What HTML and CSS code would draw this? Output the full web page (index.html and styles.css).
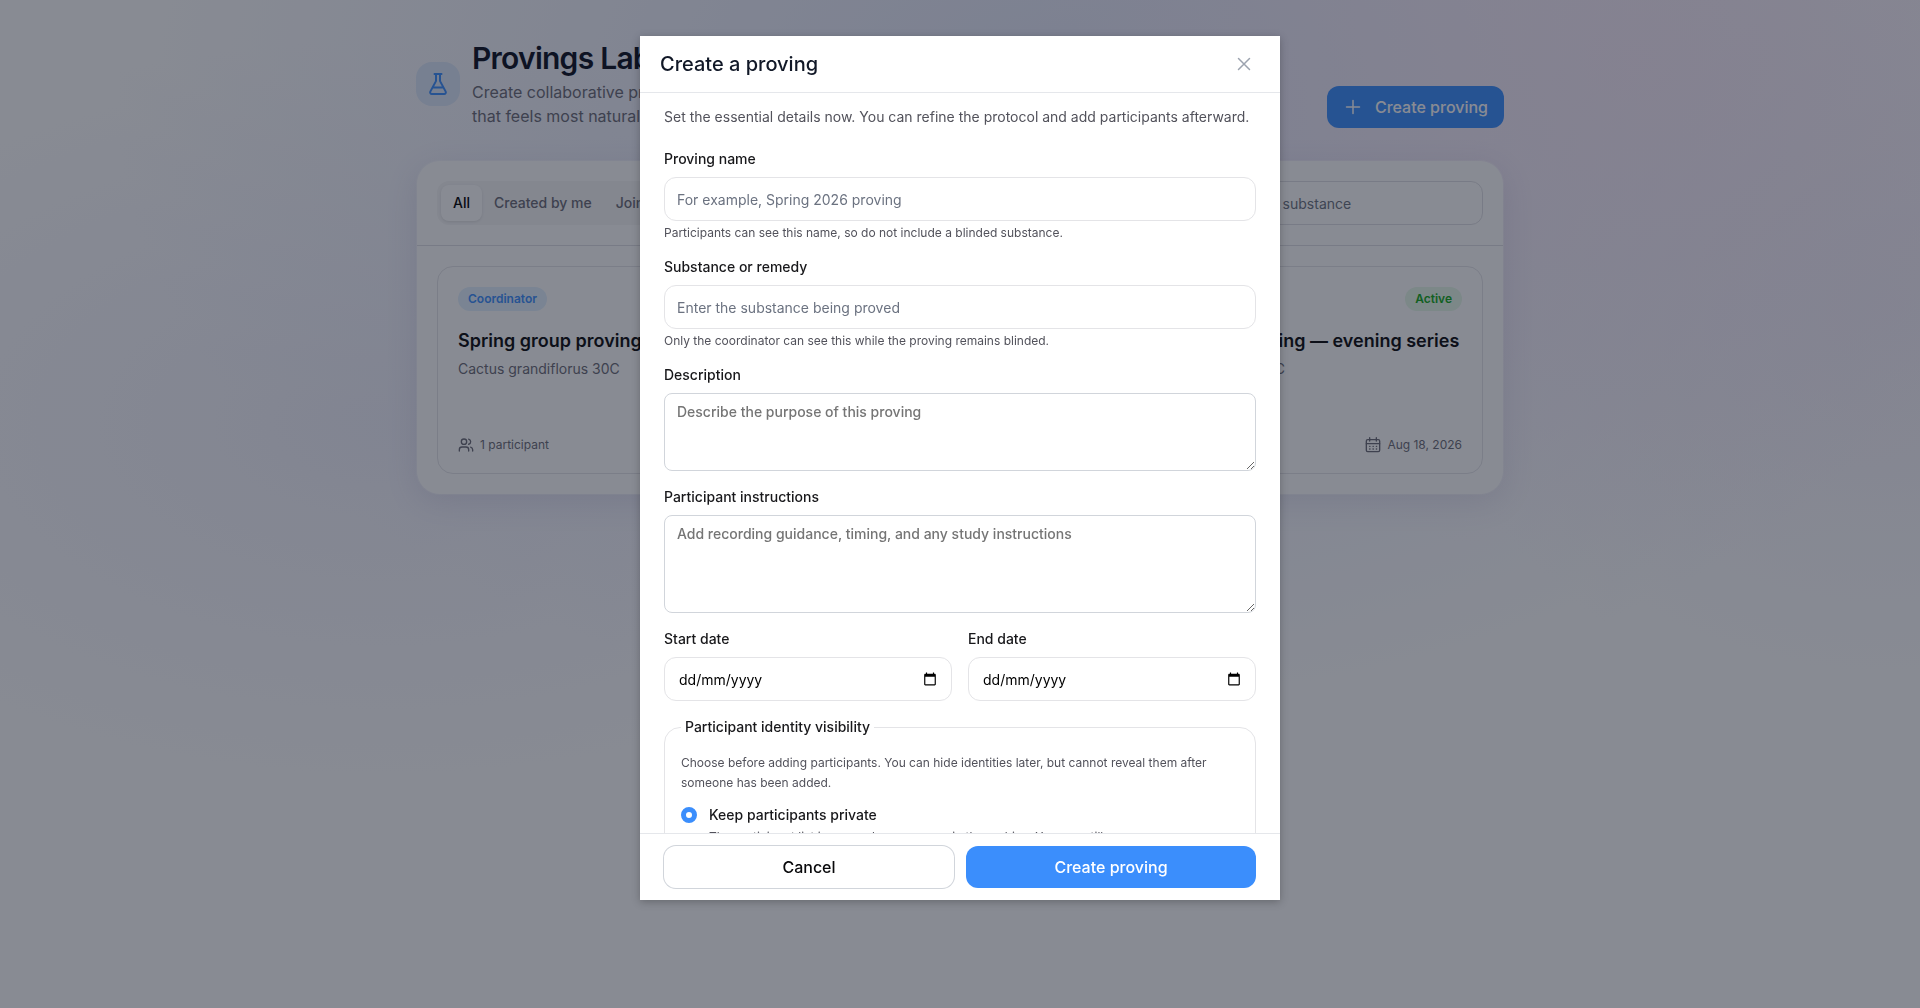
FILE: index.html
```html
<!DOCTYPE html>
<html lang="en-GB">
<head>
  <meta charset="UTF-8">
  <meta name="viewport" content="width=device-width, initial-scale=1">
  <title>Provings Lab</title>
  <link rel="stylesheet" href="styles.css">
</head>
<body>
  <main class="page">
    <header class="page-header">
      <div class="page-intro">
        <span class="page-icon">
          <svg viewBox="0 0 24 24" width="24" height="24"><path d="M8.5 2h7M10 2v6.5a2 2 0 0 1-.2.9L4.3 19.6A1.7 1.7 0 0 0 5.8 22h12.4a1.7 1.7 0 0 0 1.5-2.4L14.2 9.400a2 2 0 0 1-.2-.9V2M7 15.500h10"/></svg>
        </span>
        <div>
          <h1>Provings Lab</h1>
          <p>Create collaborative provings and record your experience in the way<br>that feels most natural to you.</p>
        </div>
      </div>
      <button type="button" class="btn btn-primary">
        <svg viewBox="0 0 20 20" width="20" height="20"><path d="M10 3.500v13M3.500 10h13"/></svg>
        Create proving
      </button>
    </header>

    <section class="panel">
      <div class="toolbar">
        <div class="tabs">
          <button type="button" class="tab active">All</button>
          <button type="button" class="tab">Created by me</button>
          <button type="button" class="tab">Joined</button>
        </div>
        <input type="search" class="search" aria-label="Search provings" placeholder="Search by name or substance">
      </div>

      <div class="cards">
        <article class="card">
          <div class="card-row"><span class="badge badge-blue">Coordinator</span></div>
          <h2>Spring group proving</h2>
          <p>Cactus grandiflorus 30C</p>
          <div class="card-row card-foot">
            <span class="meta"><svg viewBox="0 0 24 24" width="16" height="16"><path d="M16 21v-2a4 4 0 0 0-4-4H6a4 4 0 0 0-4 4v2M22 21v-2a4 4 0 0 0-3-3.870M16 3.130a4 4 0 0 1 0 7.750"/><circle cx="9" cy="7" r="4"/></svg>1 participant</span>
          </div>
        </article>
        <article class="card"></article>
        <article class="card">
          <div class="card-row card-end"><span class="badge badge-green">Active</span></div>
          <h2>Autumn proving — evening series</h2>
          <p>Natrum mur 200C</p>
          <div class="card-row card-foot card-end">
            <span class="meta"><svg viewBox="0 0 24 24" width="16" height="16"><rect x="2" y="4" width="20" height="18" rx="2"/><path d="M7 1v5M17 1v5M2 10h20M7 14h.5M12 14h.5M17 14h.5M7 18h.5M12 18h.5M17 18h.5"/></svg>Aug 18, 2026</span>
          </div>
        </article>
      </div>
    </section>
  </main>

  <div class="overlay">
    <form class="modal" role="dialog" aria-modal="true" aria-labelledby="modal-title">
      <header class="modal-header">
        <h2 id="modal-title">Create a proving</h2>
        <button type="button" class="close" aria-label="Close">
          <svg viewBox="0 0 20 20" width="20" height="20"><path d="M4.500 4.500l11 11M15.500 4.500l-11 11"/></svg>
        </button>
      </header>

      <div class="modal-body">
        <p class="lead">Set the essential details now. You can refine the protocol and add participants afterward.</p>

        <div class="field">
          <label for="name">Proving name</label>
          <input type="text" id="name" placeholder="For example, Spring 2026 proving">
          <p class="hint">Participants can see this name, so do not include a blinded substance.</p>
        </div>
        <div class="field">
          <label for="substance">Substance or remedy</label>
          <input type="text" id="substance" placeholder="Enter the substance being proved">
          <p class="hint">Only the coordinator can see this while the proving remains blinded.</p>
        </div>
        <div class="field">
          <label for="description">Description</label>
          <textarea id="description" rows="3" placeholder="Describe the purpose of this proving"></textarea>
        </div>
        <div class="field">
          <label for="instructions">Participant instructions</label>
          <textarea id="instructions" rows="4" placeholder="Add recording guidance, timing, and any study instructions"></textarea>
        </div>
        <div class="dates">
          <div class="field">
            <label for="start">Start date</label>
            <div class="date">
              <input type="text" id="start" placeholder="dd/mm/yyyy">
              <svg viewBox="0 0 24 24" width="14" height="14"><path d="M20 3h-1V1h-2v2H7V1H5v2H4c-1.100 0-2 .9-2 2v16c0 1.100.9 2 2 2h16c1.100 0 2-.9 2-2V5c0-1.100-.9-2-2-2zm0 18H4V8h16v13z"/></svg>
            </div>
          </div>
          <div class="field">
            <label for="end">End date</label>
            <div class="date">
              <input type="text" id="end" placeholder="dd/mm/yyyy">
              <svg viewBox="0 0 24 24" width="14" height="14"><path d="M20 3h-1V1h-2v2H7V1H5v2H4c-1.100 0-2 .9-2 2v16c0 1.100.9 2 2 2h16c1.100 0 2-.9 2-2V5c0-1.100-.9-2-2-2zm0 18H4V8h16v13z"/></svg>
            </div>
          </div>
        </div>

        <fieldset>
          <legend>Participant identity visibility</legend>
          <p class="note">Choose before adding participants. You can hide identities later, but cannot reveal them after someone has been added.</p>
          <div class="option">
            <input type="radio" name="visibility" id="private" checked>
            <div>
              <label for="private">Keep participants private</label>
              <p class="note">The participant list is never shown or seen in the archive. You can still message everyone.</p>
            </div>
          </div>
        </fieldset>
      </div>

      <footer class="modal-footer">
        <button type="button" class="btn btn-outline">Cancel</button>
        <button type="submit" class="btn btn-primary">Create proving</button>
      </footer>
    </form>
  </div>
</body>
</html>
```

FILE: styles.css
```css
* { box-sizing: border-box; }

body {
  margin: 0;
  min-height: 100vh;
  font-family: Inter, "Liberation Sans", sans-serif;
  font-size: 14px;
  line-height: 20px;
  color: #18181b;
  background:
    radial-gradient(ellipse 32% 50% at 85% 6%, rgba(250, 232, 248, 0.7), transparent),
    radial-gradient(ellipse 50% 62% at 56% 10%, rgba(226, 230, 250, 0.9), transparent),
    radial-gradient(ellipse 36% 38% at 20% 42%, rgba(240, 240, 252, 0.8), transparent),
    radial-gradient(ellipse 24% 40% at 98% 30%, rgba(240, 238, 250, 0.7), transparent),
    #fff;
}

h1, h2, p { margin: 0; }
button, input, textarea { font: inherit; color: inherit; }
svg { fill: none; stroke: currentColor; stroke-width: 2; stroke-linecap: round; stroke-linejoin: round; flex: none; }

.page { max-width: 1088px; margin: 0 auto; padding: 40px 0; }

.page-header { display: flex; justify-content: space-between; align-items: flex-end; margin-bottom: 32px; }
.page-intro { display: flex; align-items: center; gap: 12px; }
.page-icon {
  display: flex; align-items: center; justify-content: center;
  width: 44px; height: 44px;
  border-radius: 16px;
  background: #dce8fb;
  color: #3b8efc;
}
h1 { font-size: 30px; line-height: 36px; font-weight: 600; letter-spacing: -0.025em; color: #0a0f1f; margin-bottom: 4px; }
.page-intro p { font-size: 16px; line-height: 24px; color: #6b6b76; }

.btn {
  display: flex; align-items: center; justify-content: center; gap: 12px;
  height: 42px;
  padding: 0 16px;
  border: 0;
  border-radius: 12px;
  font-size: 16px; line-height: 24px; font-weight: 500;
}
.btn svg { stroke-width: 1.5; }
.btn-primary { background: #3b8efc; color: #fff; }
.btn-outline { background: #fff; color: #09090b; box-shadow: 0 0 0 1px #d1d5db; }

.panel {
  border: 1px solid rgba(255, 255, 255, 0.3);
  border-radius: 24px;
  background: #fff;
  background-clip: padding-box;
  box-shadow: 0 8px 32px rgba(80, 70, 130, 0.12);
}
.toolbar { display: flex; justify-content: space-between; padding: 20px; border-bottom: 1px solid #dfdfe4; }
.tabs { display: flex; padding: 4px; border-radius: 12px; background: #f6f6f7; }
.tab { padding: 0 12px; border: 0; border-radius: 8px; background: none; font-weight: 500; color: #6b6b76; }
.tab.active { background: #fff; color: #000; box-shadow: 0 1px 3px rgba(0, 0, 0, 0.1); }
.search { width: 370px; max-width: 50%; height: 44px; padding: 0 12px 0 40px; border: 1px solid #dfdfe4; border-radius: 12px; background: none; }

.cards { display: grid; grid-template-columns: repeat(3, 1fr); gap: 16px; padding: 20px; }
.card { display: flex; flex-direction: column; min-height: 208px; padding: 20px; border: 1px solid #e4e4e8; border-radius: 16px; }
.card h2 { margin: 16px 0 4px; font-size: 18px; line-height: 28px; font-weight: 600; color: #09090b; white-space: nowrap; }
.card p { color: #6b6b76; }
.card-row { display: flex; justify-content: space-between; }
.card-end { justify-content: flex-end; }
.card-foot { margin-top: auto; }
.badge { padding: 4px 10px; border-radius: 12px; font-size: 12px; line-height: 16px; font-weight: 600; }
.badge-blue { background: #e3f1fe; color: #3b8efc; }
.badge-green { background: #e6f8e8; color: #10a818; }
.meta { display: flex; gap: 6px; font-size: 12px; line-height: 16px; color: #6b6b76; }

.overlay {
  position: fixed; inset: 0;
  display: flex; justify-content: center; align-items: flex-start;
  padding: 36px 16px;
  background: rgba(17, 24, 39, 0.5);
}
.modal {
  display: flex; flex-direction: column;
  width: 640px; max-width: 100%; max-height: calc(100vh - 144px);
  background: #fff;
  box-shadow: 0 2px 8px rgba(0, 0, 0, 0.25);
}
.modal-header { display: flex; align-items: center; justify-content: space-between; padding: 14px 20px; border-bottom: 1px solid #e5e7eb; }
.modal-header h2 { font-size: 20px; line-height: 28px; font-weight: 500; color: #111827; }
.close { display: flex; padding: 4px 6px; border: 0; background: none; color: #9ca3af; }
.close svg { stroke-width: 1.5; }

.modal-body { flex: 1; min-height: 0; overflow: hidden; padding: 12px 24px; }
.lead { margin-bottom: 20px; line-height: 24px; color: #52525b; }
.field { margin-bottom: 16px; }
.field label { display: block; margin-bottom: 8px; font-weight: 500; }
.field input {
  display: block;
  width: 100%; height: 44px;
  padding: 0 12px;
  border: 1px solid #e4e4e7;
  border-radius: 12px;
  background: #fff;
}
input::placeholder { color: #6b7280; }
textarea {
  display: block;
  width: 100%;
  padding: 8px 12px;
  border: 1px solid #d1d5db;
  border-radius: 8px;
  font-weight: 500;
}
textarea::placeholder { color: #757575; }
.hint { margin-top: 4px; font-size: 12px; line-height: 16px; color: #52525b; }

.dates { display: grid; grid-template-columns: 1fr 1fr; gap: 16px; }
.date { position: relative; color: #000; }
.date input { padding: 0 40px 0 14px; }
.date input::placeholder { color: #000; }
.date svg { position: absolute; top: 15px; right: 15px; fill: currentColor; stroke: none; }

fieldset { margin: 0; padding: 16px; border: 1px solid #e4e4e7; border-radius: 16px; }
legend { padding: 0 4px; font-weight: 500; }
.note { font-size: 12px; color: #52525b; }
.option { display: flex; gap: 12px; margin-top: 12px; }
.option label { font-weight: 500; }
.option .note { margin-top: 2px; }
.option input {
  appearance: none;
  flex: none;
  width: 16px; height: 16px;
  margin: 2px 0 0;
  border: 1px solid #d1d5db;
  border-radius: 50%;
}
.option input:checked { border: 5px solid #3b8efc; background: #fff; }

.modal-footer { display: grid; grid-template-columns: 1fr 1fr; gap: 12px; padding: 12px 24px; border-top: 1px solid #e5e7eb; }
```
